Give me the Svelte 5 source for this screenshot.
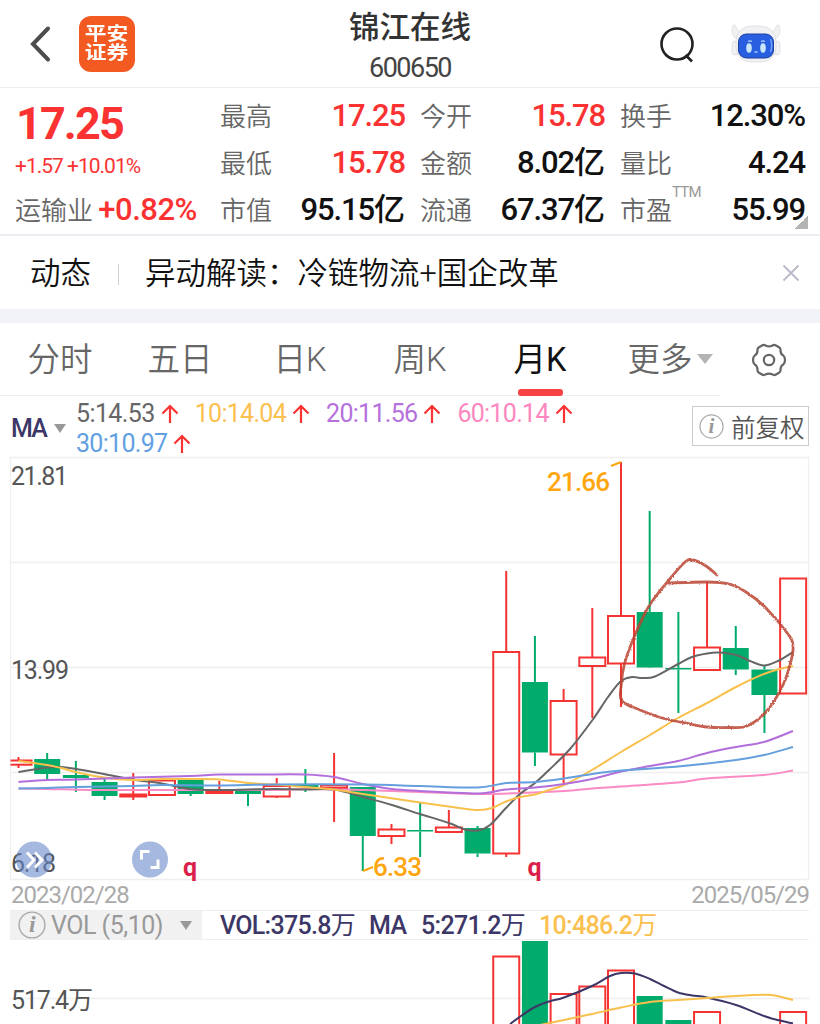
<script>
  const quotes = [
    { label: '最高', value: '17.25', up: true },
    { label: '今开', value: '15.78', up: true },
    { label: '换手', value: '12.30%' },
    { label: '最低', value: '15.78', up: true },
    { label: '金额', value: '8.02', unit: '亿' },
    { label: '量比', value: '4.24' },
    { label: '市值', value: '95.15', unit: '亿' },
    { label: '流通', value: '67.37', unit: '亿' },
    { label: '市盈', value: '55.99', sup: 'TTM' }
  ];

  const tabs = ['分时', '五日', '日K', '周K', '月K', '更多'];
  let active = $state('月K');
  let showNews = $state(true);

  const averages = [
    { text: '5:14.53', color: 'gray' },
    { text: '10:14.04', color: 'yellow' },
    { text: '20:11.56', color: 'purple' },
    { text: '60:10.14', color: 'pink' },
    { text: '30:10.97', color: 'blue' }
  ];

  // body top, body bottom, wick top, wick bottom, rising
  const candles = [
    [760.5, 764.7, 757, 768, 1],
    [759, 774, 753, 780, 0],
    [775, 778, 761, 792, 0],
    [782, 796, 779, 800, 0],
    [794.5, 796.5, 773, 800, 1],
    [780.5, 795, 780, 796, 1],
    [779, 794, 779, 796, 0],
    [791.5, 793, 781, 794, 1],
    [790, 794, 789, 806, 0],
    [786, 796.5, 778, 798, 1],
    [784.5, 787, 769, 792, 0],
    [785.5, 788, 753, 822, 1],
    [787, 836, 787, 871, 0],
    [829.5, 836, 824, 844, 1],
    [830, 831.5, 802, 857, 0],
    [827.5, 832, 810, 832, 1],
    [828, 853.5, 826, 857, 0],
    [652, 853.5, 571, 857, 1],
    [682, 752.5, 636, 766, 0],
    [701, 754.5, 689, 783, 1],
    [657.5, 666, 608, 718, 1],
    [616, 663.5, 462, 707, 1],
    [612, 667.5, 511, 668, 0],
    [668, 669.5, 612, 713, 0],
    [647.5, 670, 582, 670, 1],
    [648, 669.5, 626, 675, 0],
    [669.5, 695, 666, 733, 0],
    [578.5, 693.5, 578.5, 693.5, 1]
  ];

  const volumes = [
    [17, 956.5, 1],
    [18, 941, 0],
    [19, 994, 1],
    [20, 986.5, 1],
    [21, 970.5, 1],
    [22, 996, 0],
    [23, 1020, 0],
    [24, 1012, 1],
    [27, 1012, 1]
  ];

  const lines = {
    pink: [[18.5, 788.5], [47, 789], [90, 790], [133, 790], [276, 790], [305, 789], [363, 790], [420, 792], [478, 794], [520, 793], [564, 791], [592, 788.5], [621, 786.5], [678, 782.5], [707, 778.5], [764, 775], [793, 770.5]],
    gray: [[18.5, 772], [47, 767.5], [61, 767], [76, 769], [104, 774], [133, 779.5], [162, 783.5], [190, 789], [219, 790], [248, 789.5], [276, 789], [305, 789.5], [334, 789.5], [363, 797], [392, 805], [420, 814], [449, 823], [465, 829.5], [478, 830.5], [490, 825], [506, 808], [520, 794], [535, 783], [549, 770], [570, 749], [592.5, 720], [608, 697], [621, 681], [632, 677], [642, 678], [655, 676.5], [678, 664], [692, 657], [707, 653.5], [718, 652.5], [736, 655], [750, 661], [764, 665.5], [778, 661], [793, 652]],
    yellow: [[18.5, 761], [47, 765], [61, 768], [76, 772], [104, 777.5], [133, 780], [162, 779], [190, 779], [219, 779.5], [248, 783], [276, 784.5], [305, 787], [334, 789.5], [363, 794], [420, 802.5], [449, 806.5], [478, 810], [492, 808], [506, 801.5], [520, 797], [535, 794.5], [549, 790], [564, 785], [592, 770], [621, 752], [650, 735], [678, 718], [707, 703], [736, 687], [764, 674], [780, 669], [793, 666]],
    purple: [[18.5, 782], [47, 780], [76, 779.5], [133, 777.5], [190, 776], [219, 774.5], [260, 774.5], [305, 774.5], [334, 777], [363, 784], [392, 789], [420, 791], [449, 792.5], [478, 793.5], [492, 792], [506, 789.5], [535, 787.5], [564, 784], [592, 779], [621, 771.5], [650, 766], [678, 761], [707, 753], [736, 747], [764, 742], [793, 731]],
    blue: [[18.5, 788.5], [47, 788], [76, 787], [133, 786], [162, 785], [219, 785.5], [276, 784.5], [363, 784.5], [420, 786], [478, 787.5], [506, 783], [535, 782], [564, 778.5], [592, 774], [621, 770.5], [678, 766.5], [736, 760], [764, 755], [793, 747]]
  };

  const volLines = {
    navy: [[510, 1024], [521, 1016], [535, 1007], [549, 1001.5], [564, 997.5], [592, 986], [610, 976], [621, 973], [635, 973.5], [650, 979], [664, 986], [678, 992.5], [692, 995.5], [707, 997.5], [736, 1005], [764, 1016], [780, 1020.5], [793, 1023.5]],
    yellow: [[540, 1025], [564, 1020], [592, 1014], [621, 1007.5], [650, 1002], [678, 1000], [707, 998], [736, 996], [764, 994.8], [775, 995.5], [793, 1000]]
  };

  const scribble = [[717, 575], [706, 566], [693, 560], [685, 562], [669, 580], [649, 606], [635, 635], [625, 662], [621, 687], [622, 701], [640, 710], [662, 718], [690, 724], [707, 727], [730, 727.5], [747, 726], [766, 712], [783, 685], [791, 661], [793, 646], [788, 634], [765, 607], [746, 592], [729, 584], [707, 582], [668, 583]];

  const cx = (i) => 18.5 + i * 28.69;

  function smooth(p) {
    let d = `M${p[0][0]} ${p[0][1]}`;
    for (let i = 0; i < p.length - 1; i++) {
      const a = p[i - 1] || p[i];
      const b = p[i];
      const c = p[i + 1];
      const e = p[i + 2] || c;
      d += `C${b[0] + (c[0] - a[0]) / 6} ${b[1] + (c[1] - a[1]) / 6} ${c[0] - (e[0] - b[0]) / 6} ${c[1] - (e[1] - b[1]) / 6} ${c[0]} ${c[1]}`;
    }
    return d;
  }
</script>

{#snippet info(size)}
  <svg class="info" width={size} height={size} viewBox="0 0 26 26">
    <circle cx="13" cy="13" r="12" />
    <text x="13" y="19.500" text-anchor="middle">i</text>
  </svg>
{/snippet}

<div class="page">
  <header>
    <button class="back" aria-label="返回">
      <svg width="24" height="40" viewBox="0 0 24 40">
        <path d="M19 4.500 4 20l15 15.500" />
      </svg>
    </button>
    <div class="logo"><span>平安</span><span>证券</span></div>
    <div class="title">
      <h1>锦江在线</h1>
      <p>600650</p>
    </div>
    <svg class="search" width="36" height="38" viewBox="0 0 36 38">
      <circle cx="18" cy="18" r="15.500" />
      <path d="m26.500 29 6.500 6.500" />
    </svg>
    <svg class="robot" width="50" height="40" viewBox="0 0 50 40">
      <path class="shell" d="M2 1.500C-1 10 3 15 9 16l7-9C11 8 6 8 5 3 4 1 3 0 2 1.500zM48 1.500C51 10 47 15 41 16l-7-9c5 1 10 1 11-4 1-2 2-3 3-1.500z" />
      <rect class="shell" x="1" y="17" width="7" height="14" rx="3" />
      <rect class="shell" x="42" y="17" width="7" height="14" rx="3" />
      <rect class="shell" x="5" y="2" width="40" height="36" rx="15" />
      <rect class="face" x="7.500" y="10" width="35" height="24" rx="8" />
      <path class="rim" d="M39.500 15c1.500 4 1.500 9 0 13" />
      <ellipse class="eye" cx="18" cy="24" rx="2.800" ry="4.800" />
      <ellipse class="eye" cx="32" cy="24" rx="2.800" ry="4.800" />
      <path class="brow" d="M17 17.500q2-1 4 0M30 17.500q2-1 4 0M23.500 27.500q1.500 1.500 3 0" />
    </svg>
  </header>

  <section class="quote">
    <div class="main">
      <strong>17.25</strong>
      <span class="change">+1.57 +10.01%</span>
      <span class="sector">运输业 <b>+0.82%</b></span>
    </div>
    <dl>
      {#each quotes as q}
        <div class="cell">
          <dt>{q.label}{#if q.sup}<sup>{q.sup}</sup>{/if}</dt>
          <dd class:up={q.up}>{q.value}{#if q.unit}<i>{q.unit}</i>{/if}</dd>
        </div>
      {/each}
    </dl>
    <span class="corner"></span>
  </section>

  {#if showNews}
    <section class="news">
      <span class="tag">动态</span>
      <p>异动解读：冷链物流+国企改革</p>
      <button aria-label="关闭" onclick={() => (showNews = false)}>
        <svg width="18" height="18" viewBox="0 0 18 18"><path d="m1.500 1.500 15 15m0-15-15 15" /></svg>
      </button>
    </section>
  {/if}

  <div class="band"></div>

  <nav>
    <div class="tabs">
      {#each tabs as tab}
        <button class:active={active === tab} class:more={tab === '更多'} onclick={() => (active = tab)}>
          {tab}{#if tab === '更多'}<span class="caret"></span>{/if}
        </button>
      {/each}
    </div>
    <svg class="gear" width="36" height="36" viewBox="0 0 36 36">
      <path d="M11 3.500q2-1.200 4 .300 3 1.200 6 0 2-1.500 4-.3l3 1.800q2 1.200 1.500 3.700.5 3.500 2.800 4.500 1.700 1.500 1.700 4.500t-1.700 4.500q-2.300 1-2.800 4.500.5 2.500-1.500 3.700l-3 1.800q-2 1.200-4-.3-3-1.200-6 0-2 1.500-4 .3l-3-1.800q-2-1.200-1.500-3.700-.5-3.500-2.800-4.500-1.700-1.500-1.700-4.500t1.700-4.500q2.300-1 2.800-4.500-.5-2.500 1.500-3.700z" />
      <circle cx="18" cy="18" r="5.200" />
    </svg>
  </nav>

  <section class="ma">
    <span class="name">MA</span>
    <span class="caret small"></span>
    <div class="values">
      {#each averages as ma}
        <span class={ma.color}>
          {ma.text}
          <svg width="18" height="20" viewBox="0 0 18 20"><path d="M9 19V2M1.500 9.500 9 2l7.500 7.500" /></svg>
        </span>
      {/each}
    </div>
    <button class="adjust">{@render info(25)}前复权</button>
  </section>

  <svg class="chart" width="820" height="424" viewBox="0 456 820 424">
    <defs>
      <clipPath id="plot"><rect x="10.500" y="456" width="799" height="424" /></clipPath>
      <filter id="crayon" x="-5%" y="-5%" width="110%" height="110%">
        <feTurbulence type="fractalNoise" baseFrequency="0.7" numOctaves="2" seed="4" />
        <feDisplacementMap in="SourceGraphic" scale="2.500" xChannelSelector="R" yChannelSelector="G" />
      </filter>
    </defs>
    <path class="grid" d="M10.500 457.500h798v422h-798zM11 562.500h797M11 667.500h797M11 772.500h797" />
    <text class="axis" x="11" y="485" textLength="57">21.81</text>
    <text class="axis" x="11" y="678.500" textLength="58">13.99</text>
    <text class="axis" x="11" y="872" textLength="45">6.18</text>

    <g clip-path="url(#plot)">
      {#each candles as [top, bottom, high, low, rise], i}
        <g class={rise ? 'rise' : 'fall'}>
          <path d="M{cx(i)} {high}V{top}M{cx(i)} {bottom}V{low}" />
          <rect x={cx(i) - 13} y={top} width="26" height={bottom - top} />
        </g>
      {/each}
    </g>

    {#each Object.entries(lines) as [color, points]}
      <path class="line {color}" d={smooth(points)} />
    {/each}

    <path class="pointer" d="m611 466 10-4M363 871l10-4" />
    <text class="mark" x="547" y="490.500" textLength="63">21.66</text>
    <text class="mark" x="373" y="876" textLength="49">6.33</text>
    <text class="event" x="183" y="876">q</text>
    <text class="event" x="527.500" y="876">q</text>

    <path class="scribble" d={smooth(scribble)} filter="url(#crayon)" />

    <circle class="bubble" cx="34" cy="859.500" r="18" />
    <circle class="bubble" cx="150" cy="859.500" r="18" />
    <path class="glyph" d="m27 852.500 7 7.500-7 7.500M35 852.500l7 7.500-7 7.500M141.500 859.500v-8h8M150.500 867.500h7.500v-8" />
  </svg>

  <div class="dates"><span>2023/02/28</span><span>2025/05/29</span></div>

  <section class="vol">
    <div class="picker">{@render info(28)}<span>VOL (5,10)</span><span class="caret small"></span></div>
    <span class="v1">VOL:375.8<i>万</i></span>
    <span class="v2">MA</span>
    <span class="v3">5:271.2<i>万</i></span>
    <span class="v4">10:486.2<i>万</i></span>
  </section>

  <svg class="chart" width="820" height="84" viewBox="0 940 820 84">
    <path class="grid" d="M10 998.500h799" />
    <text class="axis" x="11" y="1009" textLength="82">517.4万</text>
    {#each volumes as [i, top, rise]}
      <g class={rise ? 'rise' : 'fall'}>
        <rect x={cx(i) - 13} y={top} width="26" height={1030 - top} />
      </g>
    {/each}
    {#each Object.entries(volLines) as [color, points]}
      <path class="line {color}" d={smooth(points)} />
    {/each}
  </svg>
</div>

<style>
  :global(body) {
    margin: 0;
    background: #fff;
  }

  .page {
    width: 820px;
    height: 1024px;
    overflow: hidden;
    background: #fff;
    font-family: Roboto, 'Noto Sans CJK SC', sans-serif;
    color: #111;
  }

  .page * {
    box-sizing: border-box;
  }

  button {
    padding: 0;
    border: none;
    background: none;
    font: inherit;
    color: inherit;
    cursor: pointer;
  }

  svg {
    display: block;
    flex: none;
  }

  h1, p, dl, dd {
    margin: 0;
  }

  i {
    font-style: normal;
    letter-spacing: 0;
  }

  header {
    display: grid;
    grid-template-columns: 79px 56px 1fr 36px 50px;
    align-items: center;
    height: 88px;
    padding-right: 39px;
    border-bottom: 1px solid #eee;
  }

  .back {
    padding-left: 29px;
  }

  .back path {
    fill: none;
    stroke: #4d4d4d;
    stroke-width: 4;
    stroke-linecap: round;
  }

  .logo {
    display: flex;
    flex-direction: column;
    align-items: center;
    justify-content: center;
    width: 56px;
    height: 56px;
    border-radius: 12px;
    background: #f35a22;
    color: #fff;
    font-size: 18.5px;
    font-weight: 700;
    line-height: 19px;
  }

  .logo span {
    transform: scaleX(1.18);
  }

  .title {
    width: 550px;
    padding-top: 6px;
    text-align: center;
  }

  h1 {
    font-size: 30.5px;
    font-weight: 500;
    line-height: 42px;
    color: #333;
  }

  .title p {
    margin-top: 1px;
    font-size: 27px;
    font-weight: 400;
    line-height: 36px;
    letter-spacing: -1.5px;
    color: #444;
  }

  .search {
    margin: 2px 0 0 -36px;
    fill: none;
    stroke: #222;
    stroke-width: 2.6;
  }

  .shell {
    fill: #f1f1f3;
    stroke: #dddde2;
    stroke-width: 0.8;
  }

  .face {
    fill: #285fe0;
    stroke: #1d3f9e;
    stroke-width: 1;
  }

  .rim {
    fill: none;
    stroke: #6fa0fa;
    stroke-width: 1.5;
  }

  .eye {
    fill: #c9e6fb;
  }

  .brow {
    fill: none;
    stroke: #a6cbf8;
    stroke-width: 1.3;
  }

  .quote {
    position: relative;
    display: grid;
    grid-template-columns: 190px 1fr;
    column-gap: 15px;
    height: 148px;
    padding: 5px 15px 0;
    border-bottom: 2px solid #ececf3;
  }

  .main {
    display: flex;
    flex-direction: column;
    color: #fb3232;
    white-space: nowrap;
  }

  .main strong {
    padding-left: 1px;
    font-size: 45px;
    line-height: 61px;
    letter-spacing: -1.9px;
  }

  .change {
    font-size: 21px;
    line-height: 25px;
    letter-spacing: -1px;
  }

  .sector {
    margin-top: 7px;
    font-size: 26px;
    line-height: 47px;
    font-weight: 350;
    color: #666;
  }

  .sector b {
    margin-left: -1px;
    font-size: 31px;
    font-weight: 500;
    letter-spacing: -0.5px;
    color: #fb3232;
  }

  dl {
    display: grid;
    grid-template-columns: repeat(3, 185px);
    grid-auto-rows: 47px;
    column-gap: 15px;
  }

  .cell {
    display: flex;
    justify-content: space-between;
    line-height: 46px;
    white-space: nowrap;
  }

  dt {
    display: flex;
    font-size: 26px;
    font-weight: 350;
    line-height: 48px;
    color: #666;
  }

  sup {
    margin-top: -18px;
    font-size: 15px;
    font-weight: 400;
    letter-spacing: -0.8px;
    color: #999;
    line-height: 47px;
    vertical-align: top;
  }

  dd {
    font-size: 31px;
    font-weight: 500;
    letter-spacing: -1.1px;
    color: #111;
  }

  dd.up {
    color: #fb3232;
  }

  .corner {
    position: absolute;
    right: 12px;
    bottom: 5px;
    width: 13px;
    height: 13px;
    background: linear-gradient(135deg, transparent 50%, #b3b3b3 50%);
  }

  .news {
    display: flex;
    align-items: center;
    height: 73px;
    padding: 0 20px 0 30px;
    font-size: 30.5px;
    font-weight: 350;
    color: #111;
  }

  .tag {
    display: flex;
    align-items: center;
    width: 115px;
    padding-bottom: 3px;
  }

  .tag::after {
    content: '';
    width: 1px;
    height: 21px;
    margin: 7px 0 0 27px;
    background: #d0d0d0;
  }

  .news p {
    flex: 1;
    padding-bottom: 3px;
  }

  .news path {
    fill: none;
    stroke: #b9b9c8;
    stroke-width: 1.8;
  }

  .band {
    height: 14px;
    background: #f2f3f8;
  }

  nav {
    display: flex;
    align-items: center;
    height: 73px;
  }

  .tabs {
    display: grid;
    grid-template-columns: repeat(6, 120px);
    height: 73px;
    border-bottom: 1px solid #eee;
  }

  .tabs button {
    position: relative;
    padding-bottom: 6px;
    font-size: 32.5px;
    font-weight: 350;
    color: #666;
  }

  .tabs .more {
    display: flex;
    align-items: center;
    justify-content: center;
    gap: 4px;
    padding-left: 20px;
  }

  .more .caret {
    margin-top: 5px;
  }

  .tabs .active {
    font-weight: 400;
    color: #111;
  }

  .active::after {
    content: '';
    position: absolute;
    left: 38px;
    bottom: -1px;
    width: 45px;
    height: 7px;
    border-radius: 3px;
    background: #f74343;
  }

  .caret {
    border: solid transparent;
    border-width: 10px 8.5px 0;
    border-top-color: #b3b3b3;
  }

  .caret.small {
    border-width: 9px 6px 0;
    border-top-color: #999;
  }

  .gear {
    margin-left: 31px;
    fill: none;
    stroke: #666;
    stroke-width: 2.2;
  }

  .ma {
    display: flex;
    align-items: center;
    height: 60px;
    padding: 0 11px;
    font-size: 25px;
  }

  .name {
    width: 43px;
    margin-top: 5px;
    font-weight: 500;
    letter-spacing: -1.8px;
    color: #3c3766;
  }

  .name + .caret {
    margin-top: 4px;
  }

  .values {
    display: flex;
    flex-wrap: wrap;
    column-gap: 16px;
    width: 540px;
    margin: 6px 0 0 10px;
    line-height: 30px;
    letter-spacing: -0.6px;
  }

  .values span {
    display: flex;
    align-items: center;
    gap: 6px;
  }

  .values span:not(.gray) {
    letter-spacing: -0.7px;
  }

  .values path {
    fill: none;
    stroke: #fb3232;
    stroke-width: 2.2;
  }

  .values .gray { color: #666; }
  .values .yellow { color: #fac050; }
  .values .purple { color: #b571dc; }
  .values .pink { color: #fc87c0; }
  .values .blue { color: #629fe2; }

  .adjust {
    display: flex;
    align-items: center;
    gap: 7px;
    width: 117px;
    height: 40px;
    margin-left: auto;
    padding-left: 6px;
    border: 1px solid #ccc;
    font-size: 24.5px;
    font-weight: 350;
    white-space: nowrap;
    color: #555;
  }

  .info circle {
    fill: none;
    stroke: #aaa;
    stroke-width: 1.3;
  }

  .info text {
    font: italic 700 22px 'Liberation Serif', serif;
    fill: #999;
  }

  .chart {
    overflow: visible;
  }

  .chart text {
    font-size: 25px;
  }

  .grid {
    fill: none;
    stroke: #efefef;
    stroke-width: 1.3;
  }

  .chart .axis {
    fill: #555;
  }

  .rise path, .rise rect {
    fill: none;
    stroke: #f53333;
    stroke-width: 2;
  }

  .fall path {
    stroke: #00ab6b;
    stroke-width: 2;
  }

  .fall rect {
    fill: #00ab6b;
  }

  .line {
    fill: none;
    stroke-width: 2;
  }

  .line.gray { stroke: #666; }
  .line.yellow { stroke: #f8c04c; }
  .line.purple { stroke: #b26edb; }
  .line.pink { stroke: #fa8bc4; }
  .line.blue { stroke: #659fdd; }
  .line.navy { stroke: #3c3766; }

  .pointer {
    stroke: #ffa50d;
    stroke-width: 2;
  }

  .chart .mark {
    font-size: 26px;
    font-weight: 500;
    fill: #ffa50d;
  }

  .chart .event {
    font-weight: 700;
    fill: #dc1f4a;
  }

  .scribble {
    fill: none;
    stroke: #bc4433;
    stroke-width: 2.8;
    stroke-linecap: round;
    opacity: 0.85;
  }

  .bubble {
    fill: #6485c8;
    fill-opacity: 0.58;
  }

  .glyph {
    fill: none;
    stroke: #fff;
    stroke-width: 3;
  }

  .dates {
    display: flex;
    justify-content: space-between;
    height: 30px;
    padding: 0 11px;
    font-size: 24px;
    line-height: 31px;
    letter-spacing: -1px;
    color: #aaa;
  }

  .vol {
    display: flex;
    height: 30px;
    margin: 0 11px 0 10px;
    border: solid #eee;
    border-width: 1px 0;
    font-size: 25px;
    font-weight: 500;
    line-height: 29px;
    letter-spacing: -0.7px;
    white-space: nowrap;
    color: #3c3766;
  }

  .vol i {
    font-weight: 400;
  }

  .picker {
    display: flex;
    align-items: center;
    gap: 5px;
    width: 192px;
    margin-right: 18px;
    padding-left: 8px;
    background: #f1f1f1;
    font-weight: 400;
    letter-spacing: -0.5px;
    color: #999;
  }

  .picker .caret {
    margin-left: 12px;
  }

  .v1 { width: 149px; }
  .v2 { width: 52px; }
  .v3 { width: 118px; }
  .v4 { color: #fac050; }
</style>
